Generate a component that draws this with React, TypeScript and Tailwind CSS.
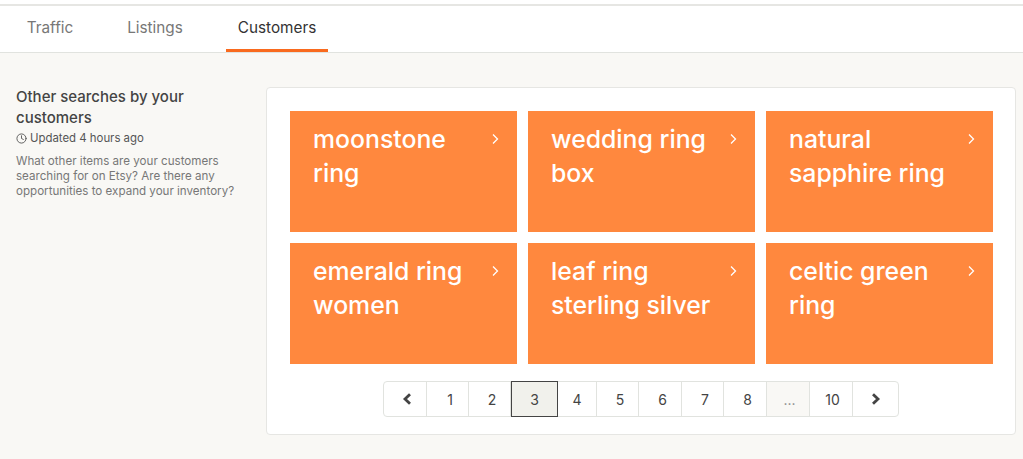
import { Clock } from "lucide-react";

const tiles = [
  ["moonstone", "ring"],
  ["wedding ring", "box"],
  ["natural", "sapphire ring"],
  ["emerald ring", "women"],
  ["leaf ring", "sterling silver"],
  ["celtic green", "ring"],
];

const pages = ["1", "2", "3", "4", "5", "6", "7", "8", "...", "10"];

function Chevron({ dir }: { dir: "left" | "right" }) {
  return (
    <svg width="10" height="12" viewBox="0 0 10 12" fill="none">
      <path
        d={dir === "left" ? "M8 1.2 3 6l5 4.8" : "M2 1.2 7 6l-5 4.8"}
        stroke="#444"
        strokeWidth="2.8"
      />
    </svg>
  );
}

function Cell({ children, className = "" }: { children: React.ReactNode; className?: string }) {
  return (
    <div className={`flex h-full items-center justify-center border-r border-[#e1e3df] text-[14px] text-[#444] ${className}`}>
      {children}
    </div>
  );
}

export default function App() {
  return (
    <div className="h-[459px] w-[1023px] overflow-hidden bg-[#f9f8f5] font-['Inter','Liberation_Sans',sans-serif]">
      <div className="h-[6px] border-b-2 border-[#e6e6e3] bg-white" />
      <nav className="flex h-[47px] border-b border-[#e1e3df] bg-white pl-[11px] text-[15.3px] text-[#777]">
        <a className="flex w-[78px] items-center justify-center pb-[2px]">Traffic</a>
        <a className="ml-[26px] flex w-[80px] items-center justify-center pb-[2px]">Listings</a>
        <a className="ml-[31px] flex w-[102px] items-center justify-center border-b-[3px] border-[#f96a1e] pt-[1px] text-[#333]">
          Customers
        </a>
      </nav>

      <div className="flex pt-[34px]">
        <aside className="-mt-[1px] w-[266px] shrink-0 pl-4 pr-[26px]">
          <h2 className="text-[15px] font-medium leading-[21px] text-[#444]">Other searches by your customers</h2>
          <div className="mt-[1px] flex items-center gap-[3px] text-[11.4px] leading-[18px] text-[#555]">
            <Clock size={11} strokeWidth={2} />
            <span>Updated 4 hours ago</span>
          </div>
          <p className="mt-[7px] text-[11.6px] leading-[15px] text-[#777]">
            What other items are your customers searching for on Etsy? Are there any opportunities to expand your inventory?
          </p>
        </aside>

        <main className="h-[348px] w-[750px] rounded-[4px] border border-[#e6e6e3] bg-white px-[23px] pt-[23px]">
          <div className="grid grid-cols-[227px_227px_227px] gap-[11px]">
            {tiles.map((t) => (
              <div key={t[0] + t[1]} className="relative h-[121px] bg-[#ff883e] pl-[23px] pt-[11px] text-[24.8px] font-medium leading-[34px] text-white">
                <div>{t[0]}</div>
                <div>{t[1]}</div>
                <svg className="absolute right-[18px] top-[22px]" width="8" height="12" viewBox="0 0 8 12" fill="none">
                  <path d="M2 1.5 6.5 6 2 10.5" stroke="#fff" strokeWidth="1.3" />
                </svg>
              </div>
            ))}
          </div>
          <div className="mt-[17px] flex justify-center">
            <div className="grid h-[36px] grid-cols-[43px_42px_42px_47px_39px_42px_43px_42px_43px_43px_43px_45px] items-stretch rounded-[4px] border border-[#e1e3df] bg-white">
              <Cell className="pl-[3px]"><Chevron dir="left" /></Cell>
              {pages.map((p) =>
                p === "3" ? (
                  <div key={p} className="-my-px flex items-center justify-center border border-[#444] bg-[#f1f1ec] text-[14px] text-[#444]">3</div>
                ) : p === "..." ? (
                  <Cell key={p} className="bg-[#f9f8f5] pl-[3px] text-[#888]">...</Cell>
                ) : p === "4" ? (
                  <Cell key={p}>{p}</Cell>
                ) : p === "10" ? (
                  <Cell key={p} className="pl-[3px]">{p}</Cell>
                ) : (
                  <Cell key={p} className="pl-[5px]">{p}</Cell>
                )
              )}
              <div className="flex items-center justify-center"><Chevron dir="right" /></div>
            </div>
          </div>
        </main>
      </div>
    </div>
  );
}
